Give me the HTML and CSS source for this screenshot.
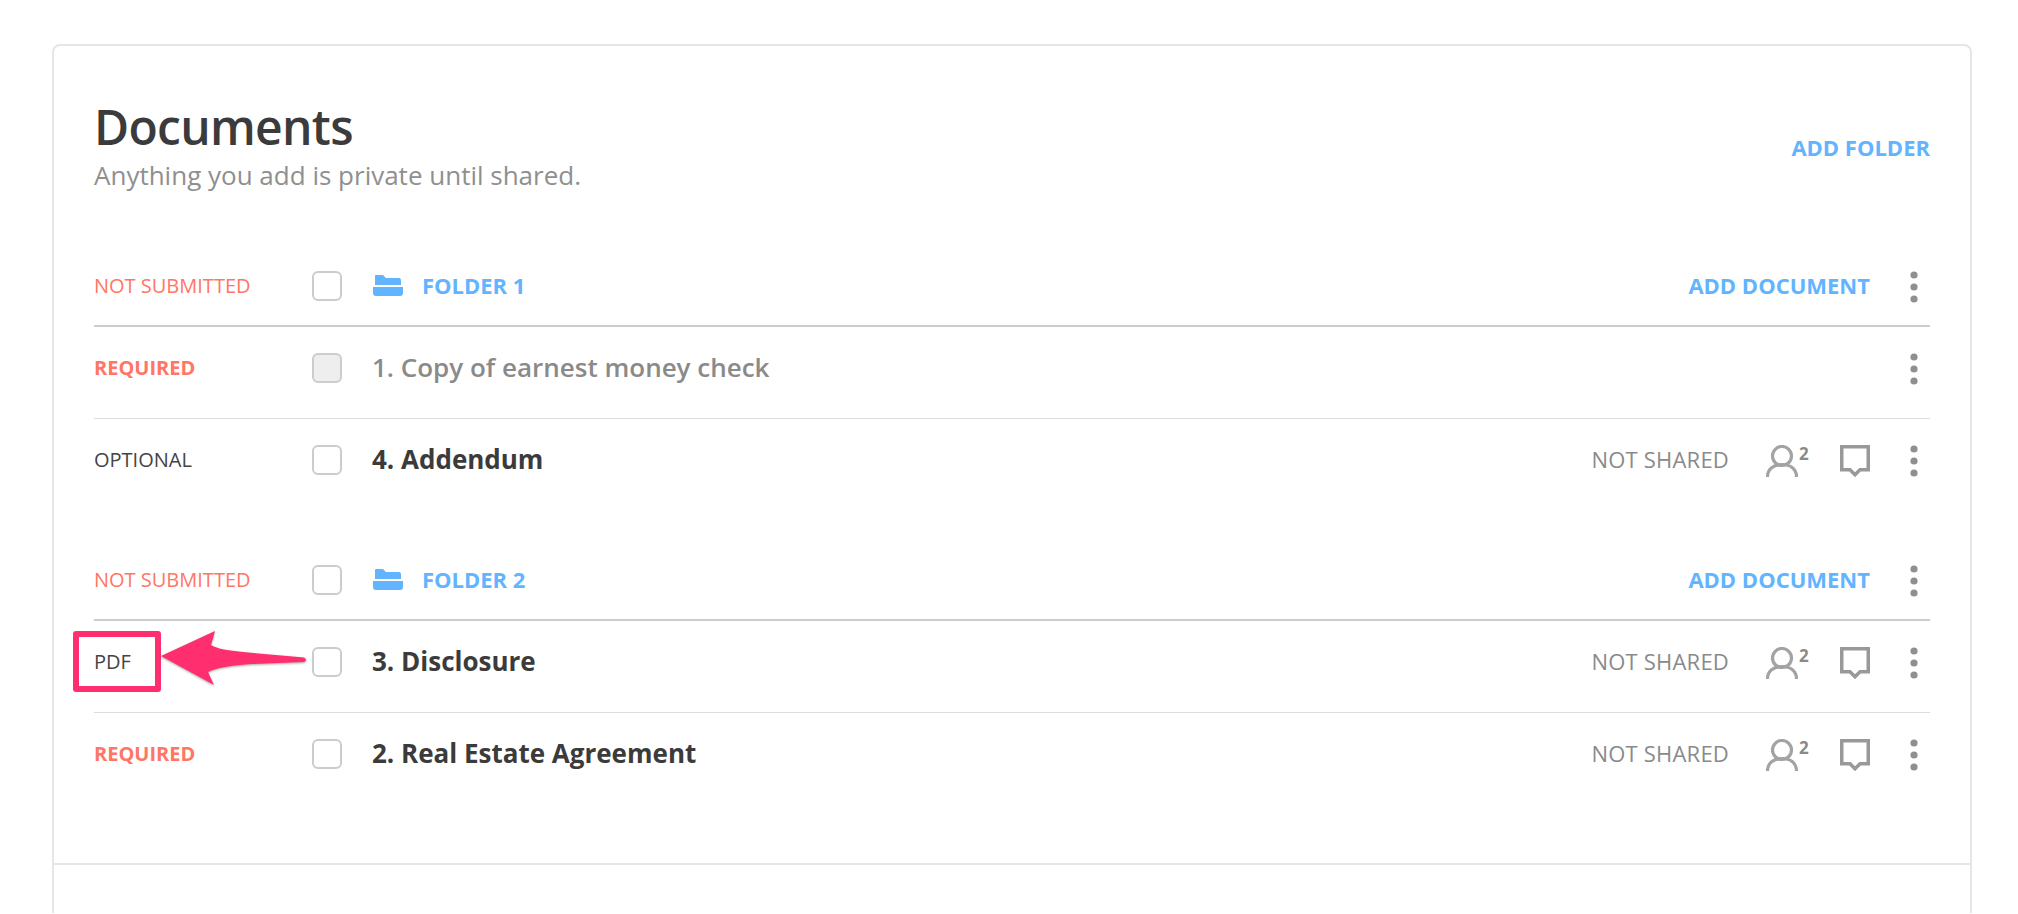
FILE: index.html
```html
<!DOCTYPE html>
<html lang="en">
<head>
  <meta charset="UTF-8">
  <title>Documents</title>
  <link rel="stylesheet" href="styles.css">
</head>
<body>

  <svg width="0" height="0" class="icon-defs">
    <symbol id="dots" viewBox="0 0 8 32"><circle cx="4" cy="4" r="3.600"/><circle cx="4" cy="16" r="3.600"/><circle cx="4" cy="28" r="3.600"/></symbol>
    <symbol id="person" viewBox="0 0 32 32"><circle cx="16" cy="11" r="9.500" fill="none" stroke-width="3.200"/><path d="M1.500 32c0-8 6-12.500 14.500-12.500S30.500 24 30.500 32" fill="none" stroke-width="3.200"/></symbol>
    <symbol id="comment" viewBox="0 0 30 32"><path d="M1.750 1.750h26.500v23h-8.250l-5 5-5-5h-8.250z" fill="none" stroke-width="3.500"/></symbol>
    <symbol id="folder" viewBox="0 0 30 21"><path d="M3 0h7l3 3h13a2 2 0 0 1 2 2v5H2V1a1 1 0 0 1 1-1zM0 12h30v6a3 3 0 0 1-3 3H3a3 3 0 0 1-3-3z"/></symbol>
  </svg>

  <div class="card">
    <div class="card-body">
      <header class="card-header">
        <div>
          <h1>Documents</h1>
          <p class="subtitle">Anything you add is private until shared.</p>
        </div>
        <a class="link">ADD FOLDER</a>
      </header>

      <section class="folder">
        <div class="row folder-row">
          <span class="label not-submitted">NOT SUBMITTED</span>
          <span class="checkbox"></span>
          <svg class="folder-icon"><use href="#folder"/></svg>
          <span class="folder-name">FOLDER 1</span>
          <a class="link row-link">ADD DOCUMENT</a>
          <svg class="dots"><use href="#dots"/></svg>
        </div>
        <div class="row doc-row">
          <span class="label required">REQUIRED</span>
          <span class="checkbox disabled"></span>
          <span class="doc-name muted">1. Copy of earnest money check</span>
          <svg class="dots push"><use href="#dots"/></svg>
        </div>
        <div class="row doc-row">
          <span class="label">OPTIONAL</span>
          <span class="checkbox"></span>
          <span class="doc-name">4. Addendum</span>
          <span class="share">NOT SHARED</span>
          <svg class="person"><use href="#person"/></svg>
          <span class="count">2</span>
          <svg class="comment"><use href="#comment"/></svg>
          <svg class="dots"><use href="#dots"/></svg>
        </div>
      </section>

      <section class="folder">
        <div class="row folder-row">
          <span class="label not-submitted">NOT SUBMITTED</span>
          <span class="checkbox"></span>
          <svg class="folder-icon"><use href="#folder"/></svg>
          <span class="folder-name">FOLDER 2</span>
          <a class="link row-link">ADD DOCUMENT</a>
          <svg class="dots"><use href="#dots"/></svg>
        </div>
        <div class="row doc-row">
          <span class="label">PDF</span>
          <span class="checkbox"></span>
          <span class="doc-name">3. Disclosure</span>
          <span class="share">NOT SHARED</span>
          <svg class="person"><use href="#person"/></svg>
          <span class="count">2</span>
          <svg class="comment"><use href="#comment"/></svg>
          <svg class="dots"><use href="#dots"/></svg>
        </div>
        <div class="row doc-row">
          <span class="label required">REQUIRED</span>
          <span class="checkbox"></span>
          <span class="doc-name">2. Real Estate Agreement</span>
          <span class="share">NOT SHARED</span>
          <svg class="person"><use href="#person"/></svg>
          <span class="count">2</span>
          <svg class="comment"><use href="#comment"/></svg>
          <svg class="dots"><use href="#dots"/></svg>
        </div>
      </section>
    </div>
    <div class="card-footer"></div>
  </div>

  <!-- Annotation drawn over the page -->
  <div class="callout-box"></div>
  <svg class="callout-arrow" viewBox="0 0 160 70">
    <path d="M3 27 57 2 53 16Q60 21 90 23.500L146 28.500Q150 31 146 33L95 35Q62 37 50 43L56 56z"/>
  </svg>

</body>
</html>
```

FILE: styles.css
```css
html, body {
  height: 100%;
}
body {
  font-family: "Open Sans", Arial, sans-serif;
  margin: 0;
  padding: 0;
  background-color: #fff;
  color: #333;
  overflow: hidden;
  position: relative;
}
.icon-defs {
  position: absolute;
}
.card {
  margin: 44px 46px 0 52px;
  height: 869px;
  box-sizing: border-box;
  border: 2px solid #e6e6e6;
  border-bottom: none;
  border-radius: 8px 8px 0 0;
}
.card-body {
  height: 817px;
  box-sizing: border-box;
  padding: 0 40px;
}
.card-footer {
  border-top: 2px solid #e6e6e6;
}
.card-header {
  height: 199px;
  display: flex;
  justify-content: space-between;
  align-items: flex-start;
}
h1 {
  margin: 0;
  padding-top: 45px;
  font-size: 48px;
  line-height: 72px;
  font-weight: 600;
  color: #3b3b3b;
  letter-spacing: -0.7px;
}
.subtitle {
  margin: -4px 0 0;
  font-size: 26px;
  line-height: 32px;
  font-weight: 400;
  color: #8f8f8f;
}
.link {
  font-size: 22px;
  font-weight: 700;
  color: #62b4ff;
  white-space: nowrap;
}
.card-header .link {
  margin-top: 84px;
  line-height: 34px;
}
.folder {
  margin-bottom: 40px;
}
.row {
  display: flex;
  align-items: center;
  height: 80px;
}
.folder-row {
  border-bottom: 2px solid #ccc;
}
.doc-row {
  padding-bottom: 11px;
  border-bottom: 1px solid #ddd;
}
.doc-row:last-child {
  padding-bottom: 0;
  border-bottom: none;
}
.label {
  width: 218px;
  flex-shrink: 0;
  font-size: 20px;
  color: #444;
}
.not-submitted {
  color: #ff7566;
}
.required {
  color: #ff7566;
  font-weight: 700;
}
.checkbox {
  width: 30px;
  height: 30px;
  box-sizing: border-box;
  flex-shrink: 0;
  border: 2px solid #ccc;
  border-radius: 6px;
  margin: 2px 30px 0 0;
  background-color: #fff;
}
.checkbox.disabled {
  background-color: #eee;
}
.folder-icon {
  width: 30px;
  height: 21px;
  fill: #62b4ff;
  margin: 0 19px 0 1px;
}
.folder-name {
  font-size: 22px;
  font-weight: 700;
  color: #62b4ff;
}
.row-link {
  margin-left: auto;
}
.doc-name {
  font-size: 26px;
  font-weight: 700;
  color: #3b3b3b;
}
.doc-name.muted {
  font-weight: 600;
  color: #8a8a8a;
}
.share {
  margin-left: auto;
  font-size: 22px;
  letter-spacing: 0.2px;
  color: #8a8a8a;
}
.person {
  width: 32px;
  height: 32px;
  margin: 4px 0 0 37px;
  stroke: #a3a3a3;
}
.count {
  align-self: flex-start;
  margin: 24px 0 0 1px;
  width: 9px;
  font-size: 17px;
  line-height: 22px;
  font-weight: 700;
  color: #8a8a8a;
}
.comment {
  width: 30px;
  height: 32px;
  margin: 4px 0 0 32px;
  stroke: #999;
}
.dots {
  width: 8px;
  height: 32px;
  margin: 4px 12px 0 40px;
  fill: #8f8f8f;
}
.dots.push {
  margin-left: auto;
}
.callout-box {
  position: absolute;
  left: 73px;
  top: 631px;
  width: 88px;
  height: 61px;
  box-sizing: border-box;
  border: 6px solid #ff2e6e;
  border-radius: 3px;
}
.callout-arrow {
  position: absolute;
  left: 158px;
  top: 629px;
  width: 160px;
  height: 70px;
  fill: #ff2e6e;
  filter: drop-shadow(0 1px 1px rgba(0, 0, 0, 0.35));
}
```
